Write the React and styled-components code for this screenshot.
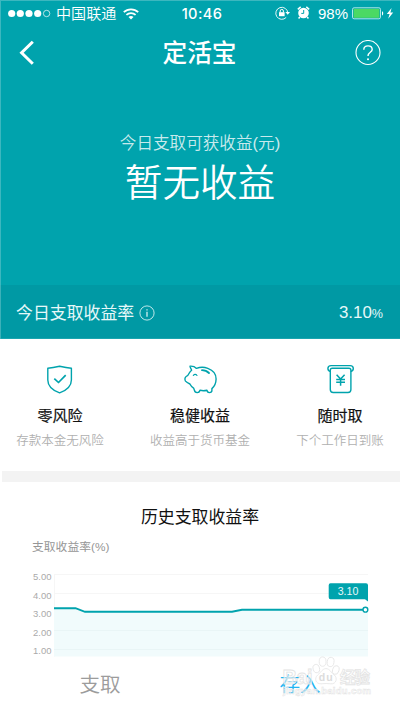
import * as React from 'react';
import styled, { createGlobalStyle } from 'styled-components';

const TEAL = '#00a3ad';

const GlobalStyle = createGlobalStyle`
  * {
    box-sizing: border-box;
  }

  body {
    margin: 0;
    background: #fff;
    font-family: 'Liberation Sans', 'Noto Sans CJK SC', sans-serif;
  }
`;

const Screen = styled.div`
  position: relative;
  display: flex;
  flex-direction: column;
  width: 400px;
  height: 710px;
  overflow: hidden;
  background: #fff;

  svg {
    display: block;
    flex: none;
  }
`;

const Top = styled.div`
  display: flex;
  flex-direction: column;
  height: 339px;
  color: #fff;
  background: ${TEAL};
  box-shadow: inset 1px 1px 0 #3cb7bf;
`;

const StatusBar = styled.div`
  display: grid;
  grid-template-columns: 1fr auto 1fr;
  align-items: center;
  height: 26px;
  padding: 1px 6px 0 8px;
`;

const StatusGroup = styled.div`
  display: flex;
  align-items: center;
  justify-content: ${(p) => (p.$end ? 'flex-end' : 'flex-start')};
`;

const Carrier = styled.span`
  margin: 0 7px 0 5px;
  font-size: 15.1px;
  font-weight: 350;
  line-height: 24px;
`;

const Clock = styled.span`
  position: relative;
  left: 1px;
  font-family: Inter, sans-serif;
  font-size: 14.6px;
  font-weight: 500;
  line-height: 24px;
  letter-spacing: 0.4px;
`;

const BatteryText = styled.span`
  margin: 0 4px 0 8px;
  font-family: 'Liberation Sans', sans-serif;
  font-size: 15px;
  line-height: 24px;
`;

const NavBar = styled.div`
  display: flex;
  align-items: center;
  justify-content: space-between;
  height: 54px;
  padding: 0 19px 0 18px;
`;

const NavTitle = styled.h1`
  height: 54px;
  margin: 0;
  padding-top: 1px;
  font-size: 24.7px;
  font-weight: 500;
  line-height: 54px;
`;

const Earnings = styled.div`
  display: flex;
  flex-direction: column;
  align-items: center;
  flex: 1;
  padding-top: 52px;
`;

const EarningsLabel = styled.div`
  height: 24px;
  font-size: 16.6px;
  font-weight: 350;
  line-height: 24px;
  color: rgba(255, 255, 255, 0.8);
`;

const EarningsValue = styled.div`
  height: 54px;
  font-size: 37.6px;
  font-weight: 350;
  line-height: 54px;
`;

const RateBar = styled.div`
  display: flex;
  align-items: center;
  height: 54px;
  padding: 1px 17px 0 16px;
  font-size: 16.9px;
  line-height: 54px;
  color: #e6f8f9;
  background: #0099a4;
  box-shadow: inset 1px 0 0 #3cb1b9, inset 0 -1px 0 #1aa5af;

  svg {
    margin-left: 5px;
  }
`;

const RateLabel = styled.span`
  padding-top: 2px;
`;

const RateValue = styled.span`
  margin-left: auto;
  padding-top: 1px;

  small {
    font-size: 12.6px;
  }
`;

const Features = styled.div`
  display: grid;
  grid-template-columns: 120px 160px 120px;
  height: 132px;
  padding-top: 24px;
`;

const Feature = styled.div`
  display: flex;
  flex-direction: column;
  align-items: center;
`;

const FeatureTitle = styled.div`
  height: 24px;
  margin-top: 7px;
  font-size: 15px;
  line-height: 24px;
  color: #111;
  -webkit-text-stroke: 0.2px #111;
`;

const FeatureNote = styled.div`
  height: 24px;
  margin-top: 1px;
  font-size: 12.5px;
  font-weight: 350;
  line-height: 24px;
  white-space: nowrap;
  color: #b0b0b0;
`;

const Divider = styled.div`
  height: 11px;
  margin-left: 2px;
  background: #f3f3f3;
`;

const History = styled.div`
  display: flex;
  flex-direction: column;
  height: 176px;
  padding-top: 23px;
`;

const HistoryTitle = styled.h2`
  height: 26px;
  margin: 0;
  font-size: 16.9px;
  font-weight: 400;
  line-height: 26px;
  text-align: center;
  color: #111;
`;

const ChartUnit = styled.div`
  height: 20px;
  margin: 6px 0 12px 32px;
  font-size: 11.8px;
  line-height: 20px;
  color: #969696;
`;

const ChartRow = styled.div`
  display: flex;
  padding-left: 33px;
`;

const Axis = styled.div`
  display: flex;
  flex-direction: column;
  width: 21px;
  margin-top: -1px;
  font-size: 9.5px;
  line-height: 18.5px;
  color: #aaa;
`;

const Actions = styled.div`
  display: grid;
  grid-template-columns: 1fr 1fr;
  height: 52px;
`;

const Action = styled.button`
  padding: 0;
  border: 0;
  font-family: inherit;
  font-size: 20.6px;
  font-weight: 350;
  line-height: 54px;
  text-align: center;
  color: ${(p) => (p.$primary ? '#22b4f2' : '#9c9c9c')};
  background: none;
`;

const Watermark = styled.div`
  position: absolute;
  top: 654px;
  left: 278px;
  pointer-events: none;
`;

const SignalDots = () => (
  <svg width="43" height="10" viewBox="0 0 43 10" fill="#fff">
    {[3.7, 12.3, 21, 29.7].map((x) => (
      <circle key={x} cx={x} cy="4.5" r="3.6" />
    ))}
    <circle cx="38.6" cy="4.5" r="3.2" fill="none" stroke="#fff" strokeWidth="0.7" />
  </svg>
);

const Wifi = () => (
  <svg width="16" height="12" viewBox="0 0 16 12" fill="none" stroke="#fff" strokeWidth="1.8">
    <path d="M0.8 4.2C4.8 0.3 11.2 0.3 15.2 4.2" />
    <path d="M3.4 6.9C6 4.5 10 4.5 12.6 6.9" />
    <path d="M5.5 8.9C7 7.7 9 7.7 10.5 8.9L8 11.4Z" fill="#fff" stroke="none" />
  </svg>
);

const RotationLock = () => (
  <svg width="15" height="14" viewBox="0 0 15 14" fill="none" stroke="#fff">
    <path d="M11.2 11.4A6 6 0 1 1 12.8 7" strokeWidth="0.9" />
    <path d="M10.4 5.9H15L12.7 8.8Z" fill="#fff" stroke="none" />
    <rect x="4" y="6.2" width="5.6" height="4" fill="#fff" stroke="none" />
    <path d="M5.2 6.5V5A1.6 1.6 0 0 1 8.4 5V6.5" strokeWidth="1" />
  </svg>
);

const Alarm = () => (
  <svg width="13" height="13" viewBox="0 0 13 13">
    <circle cx="6.5" cy="7" r="5.3" fill="#fff" />
    <path d="M0.8 3.4L3.7 0.9M12.2 3.4L9.3 0.9M2.8 11L1.6 12.4M10.2 11L11.4 12.4" stroke="#fff" strokeWidth="1.5" />
    <path d="M6.7 4V7.4H4.3" fill="none" stroke={TEAL} strokeWidth="1" />
  </svg>
);

const StatusIcons = styled.div`
  display: flex;
  gap: 7px;
  padding-bottom: 1px;
`;

const Battery = () => (
  <svg width="42" height="13" viewBox="0 0 42 13">
    <rect x="0.5" y="0.8" width="28" height="11" rx="1.6" fill="none" stroke="#c5eef0" strokeWidth="0.9" />
    <rect x="1.6" y="1.8" width="25.8" height="9" fill="#4bd964" />
    <path d="M30 4.2C31.6 4.4 31.6 8.2 30 8.4Z" fill="#fff" />
    <path d="M39.6 1L34.8 7H37.6L36.2 11.8L41.2 5.6H38.4Z" fill="#fff" />
  </svg>
);

const Back = () => (
  <svg width="26" height="26" viewBox="0 0 26 26" fill="none" stroke="#fff" strokeWidth="3">
    <path d="M14.8 1.8L3.6 12.8L14.8 23.8" />
  </svg>
);

const Help = () => (
  <svg width="26" height="26" viewBox="0 0 26 26" fill="none" stroke="#fff">
    <circle cx="13" cy="12.5" r="12" strokeWidth="1.1" />
    <path
      d="M8.8 9.8C8.8 7.2 10.6 5.9 13 5.9C15.3 5.9 17.2 7.2 17.2 9.5C17.2 12.3 13 12.4 13 15.9"
      strokeWidth="1.4"
    />
    <circle cx="13" cy="19.2" r="1" fill="#fff" stroke="none" />
  </svg>
);

const Info = () => (
  <svg width="16" height="16" viewBox="0 0 16 16" fill="none" stroke="#d2f0f2">
    <circle cx="8" cy="8" r="7.1" strokeWidth="0.9" />
    <path d="M8 6.8V11.8M8 4.2V5.6" strokeWidth="1.3" />
  </svg>
);

const Shield = () => (
  <svg width="34" height="34" viewBox="0 0 34 34" fill="none" stroke={TEAL} strokeWidth="1.4" strokeLinejoin="round">
    <path d="M16.6 3.2C20 4 24.5 4.9 28.4 5.2V17C28.4 23.5 23.5 27.4 16.6 29.9C9.7 27.4 4.8 23.5 4.8 17V5.2C8.7 4.9 13.2 4 16.6 3.2Z" />
    <path d="M11.3 15.6L15.5 19.5L22.7 12.2" strokeWidth="1.7" />
  </svg>
);

const Piggy = () => (
  <svg width="34" height="34" viewBox="0 0 34 34" fill="none" stroke={TEAL} strokeWidth="1.4" strokeLinejoin="round" strokeLinecap="round">
    <path d="M7 3.2C9.6 3 12 3.8 13.5 5.4C16.5 4.2 21 3.9 24.8 5.3C29.8 7.1 33.2 11 33.1 16C33 20.8 31.3 23.6 28.9 25.6V27.6C28.9 29.2 28 29.6 26.4 29.6C24.6 29.6 24.1 29 23.9 27.2C21.7 27.8 19 27.8 17 27.2C16.8 29 16 29.6 14.2 29.6C12.2 29.6 11.6 29 11.4 27.2L10.6 25.1C8.8 24 7.7 22.6 6.9 21C5.2 20.2 3.6 19.3 2.5 18.1C1.6 16.9 1.7 14.4 3.2 13.5C4.5 12.8 5.5 11.8 6.3 10C6.9 8.7 7.7 7.9 8.6 7.2C8.2 5.8 7.2 4.8 7 3.2Z" />
    <path d="M19 7.2C21.7 7.2 24.1 8.1 26 10" strokeWidth="1.8" />
    <path d="M10.3 12.5C11.3 11 13 11 14 12.5" strokeWidth="1.1" />
  </svg>
);

const MoneyJar = () => (
  <svg width="34" height="34" viewBox="0 0 34 34" fill="none" stroke={TEAL} strokeWidth="1.4" strokeLinejoin="round">
    <path d="M7.6 8.5C5.6 8.3 4.9 7.4 4.9 5.6C4.9 3.5 5.9 2.6 8.1 2.6H27.1C29.3 2.6 30.3 3.5 30.3 5.6C30.3 7.4 29.6 8.3 27.6 8.5" />
    <path d="M9.3 5.2H25.9C27.2 5.2 27.9 5.8 27.9 7V26.6C27.9 28.8 27.1 29.5 25 29.5H10.2C8.1 29.5 7.3 28.8 7.3 26.6V7C7.3 5.8 8 5.2 9.3 5.2Z" />
    <path d="M13.6 11.7L17.6 16L21.6 11.7M17.6 16V22.7M13.2 16.4H22M13.2 19.2H22" strokeWidth="1.5" />
  </svg>
);

const Chart = () => (
  <svg width="320" height="90" viewBox="0 0 320 90">
    <g stroke="#f6f6f6">
      <path d="M0.5 5V87.5" />
      {[5.5, 24.5, 43.5].map((y) => (
        <path key={y} d={`M0 ${y}H314`} />
      ))}
    </g>
    <path d="M0 39H22L30 42.7H178L188 40.6H314V87.5H0Z" fill="#f1fbfc" />
    <path d="M0 61.5H314M0 80.5H314" stroke="#e9f5f6" />
    <path d="M0 39.2H21.5L31 42.8H178L188 40.7H309" fill="none" stroke={TEAL} strokeWidth="1.9" />
    <circle cx="311.4" cy="40.7" r="2.4" fill="#fff" stroke={TEAL} strokeWidth="1.4" />
    <path d="M276.5 14.2H312Q314 14.2 314 16.2V32.4L311 30.2H276.5Q274.7 30.2 274.7 28.2V16.2Q274.7 14.2 276.5 14.2Z" fill={TEAL} />
    <text x="294" y="26.2" fontSize="10.6" fill="#e6f8f9" textAnchor="middle">
      3.10
    </text>
  </svg>
);

const BaiduMark = () => (
  <svg width="98" height="48" viewBox="0 0 98 48" fill="rgba(255,255,255,0.5)" stroke="#e4e4e4" strokeWidth="0.8">
    <g fontWeight="700">
      <text x="4.5" y="29.5" fontSize="20" textLength="30">
        Bai
      </text>
      <text x="62" y="28.5" fontSize="15.5" textLength="30">
        经验
      </text>
      <text x="5" y="40" fontSize="9.5" strokeWidth="0.5" textLength="88">
        jingyan.baidu.com
      </text>
    </g>
    <ellipse cx="38.3" cy="14.6" rx="3.2" ry="4.2" transform="rotate(-15 38.3 14.6)" />
    <ellipse cx="44.6" cy="7.6" rx="3.4" ry="4.7" />
    <ellipse cx="52.6" cy="8" rx="3.4" ry="4.7" transform="rotate(10 52.6 8)" />
    <ellipse cx="57.8" cy="16" rx="3.2" ry="4.4" transform="rotate(15 57.8 16)" />
    <g transform="translate(-0.3 -6)">
      <path d="M48.3 20.6C52 20.6 53.2 24.4 56.4 26.8C60.4 30 58.4 36.4 53.2 35.8C50 35.4 46.8 35.4 43.4 35.8C38 36.2 36.2 30.2 40 27C43.3 24.2 44.8 20.6 48.3 20.6Z" />
      <text x="41" y="33.3" fontSize="10.5" fontWeight="700" stroke="none" fill="#dcdcdc" textLength="14">
        du
      </text>
    </g>
  </svg>
);

const features = [
  { icon: Shield, title: '零风险', note: '存款本金无风险' },
  { icon: Piggy, title: '稳健收益', note: '收益高于货币基金' },
  { icon: MoneyJar, title: '随时取', note: '下个工作日到账' },
];

const App = () => (
  <Screen>
    <GlobalStyle />
    <Top>
      <StatusBar>
        <StatusGroup>
          <SignalDots />
          <Carrier>中国联通</Carrier>
          <Wifi />
        </StatusGroup>
        <Clock>10:46</Clock>
        <StatusGroup $end>
          <StatusIcons>
            <RotationLock />
            <Alarm />
          </StatusIcons>
          <BatteryText>98%</BatteryText>
          <Battery />
        </StatusGroup>
      </StatusBar>
      <NavBar>
        <Back />
        <NavTitle>定活宝</NavTitle>
        <Help />
      </NavBar>
      <Earnings>
        <EarningsLabel>今日支取可获收益(元)</EarningsLabel>
        <EarningsValue>暂无收益</EarningsValue>
      </Earnings>
      <RateBar>
        <RateLabel>今日支取收益率</RateLabel>
        <Info />
        <RateValue>
          3.10<small>%</small>
        </RateValue>
      </RateBar>
    </Top>
    <Features>
      {features.map(({ icon: Icon, title, note }) => (
        <Feature key={title}>
          <Icon />
          <FeatureTitle>{title}</FeatureTitle>
          <FeatureNote>{note}</FeatureNote>
        </Feature>
      ))}
    </Features>
    <Divider />
    <History>
      <HistoryTitle>历史支取收益率</HistoryTitle>
      <ChartUnit>支取收益率(%)</ChartUnit>
      <ChartRow>
        <Axis>
          {['5.00', '4.00', '3.00', '2.00', '1.00'].map((v) => (
            <span key={v}>{v}</span>
          ))}
        </Axis>
        <Chart />
      </ChartRow>
    </History>
    <Actions>
      <Action>支取</Action>
      <Action $primary>存入</Action>
    </Actions>
    <Watermark>
      <BaiduMark />
    </Watermark>
  </Screen>
);

export default App;
